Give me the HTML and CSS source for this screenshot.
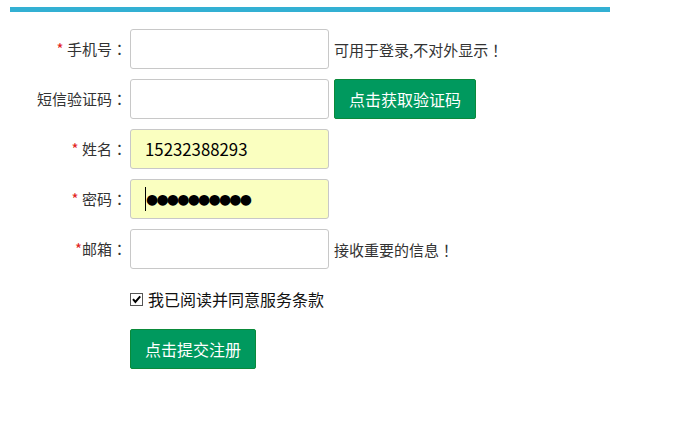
FILE: index.html
```html
<!DOCTYPE html>
<html lang="zh-CN">
<head>
<meta charset="utf-8">
<title>注册</title>
<link rel="stylesheet" href="styles.css">
</head>
<body>
<div class="topbar"></div>
<form class="reg">
  <div class="row">
    <label class="lbl"><span class="req">*</span> 手机号<span class="p" lang="ja">：</span></label>
    <input class="field" type="text">
    <span class="hint">可用于登录,不对外显示<span class="p" lang="ja">！</span></span>
  </div>
  <div class="row">
    <label class="lbl">短信验证码<span class="p" lang="ja">：</span></label>
    <input class="field" type="text">
    <button type="button" class="btn">点击获取验证码</button>
  </div>
  <div class="row">
    <label class="lbl"><span class="req">*</span> 姓名<span class="p" lang="ja">：</span></label>
    <input class="field filled" type="text" value="15232388293">
  </div>
  <div class="row">
    <label class="lbl"><span class="req">*</span> 密码<span class="p" lang="ja">：</span></label>
    <span class="pwwrap">
      <input class="field filled pw" type="text" value="●●●●●●●●●●">
      <span class="caret"></span>
    </span>
  </div>
  <div class="row">
    <label class="lbl"><span class="req">*</span>邮箱<span class="p" lang="ja">：</span></label>
    <input class="field" type="text">
    <span class="hint">接收重要的信息<span class="p" lang="ja">！</span></span>
  </div>
  <div class="check">
    <span class="cbwrap">
      <input type="checkbox" checked class="cb" id="agree">
      <svg class="tick" viewBox="0 0 13 13" width="13" height="13"><path d="M3 6.2 L5.4 9 L10.2 3.4" fill="none" stroke="#000" stroke-width="2"/></svg>
    </span>
    <label for="agree">我已阅读并同意服务条款</label>
  </div>
  <div class="submit">
    <button type="button" class="btn">点击提交注册</button>
  </div>
</form>
</body>
</html>
```
FILE: styles.css
```css
html, body {
  margin: 0;
  padding: 0;
  background: #fff;
}
body {
  font-family: "Noto Sans CJK SC", "Noto Sans", sans-serif;
  font-size: 15px;
  color: #333;
  padding-top: 7px;
  text-spacing-trim: space-all;
}
.p {
  display: inline-block;
  width: 1em;
  text-align: center;
  font-family: "Noto Sans CJK JP", "Noto Sans CJK SC", sans-serif;
  text-spacing-trim: space-all;
}
.topbar {
  margin-left: 10px;
  width: 600px;
  height: 5px;
  background: #33b0d3;
}
.reg {
  margin-top: 17px;
  display: flex;
  flex-direction: column;
}
.row {
  display: flex;
  align-items: center;
  height: 40px;
  margin-bottom: 10px;
}
.lbl {
  width: 127px;
  text-align: right;
  margin-right: 3px;
  white-space: nowrap;
  line-height: 20px;
}
.req {
  color: #e2231a;
}
.field {
  box-sizing: border-box;
  width: 199px;
  height: 40px;
  border: 1px solid #c8c8c8;
  border-radius: 3px;
  padding: 0 14px;
  margin: 0;
  font-family: "Noto Sans CJK SC", sans-serif;
  font-size: 16.8px;
  color: #000;
  background: #fff;
  outline: none;
}
.field.filled {
  background: #faffc0;
}
.pwwrap {
  position: relative;
  display: inline-block;
  height: 40px;
}
.pw {
  font-family: "DejaVu Sans", sans-serif;
  font-size: 14px;
  letter-spacing: -1.8px;
  padding-left: 15px;
}
.caret {
  position: absolute;
  left: 15px;
  top: 8px;
  width: 1px;
  height: 24px;
  background: #000;
}
.hint {
  margin-left: 5px;
  white-space: nowrap;
}
.btn {
  box-sizing: border-box;
  height: 40px;
  padding: 0;
  border: 1px solid #0a8a3a;
  border-radius: 2px;
  background: #00995e;
  color: #fff;
  font-family: "Noto Sans CJK SC", sans-serif;
  font-size: 16px;
  cursor: pointer;
}
.row .btn {
  margin-left: 5px;
  width: 142px;
}
.check {
  display: flex;
  align-items: center;
  height: 20px;
  margin-top: 10px;
  padding-left: 130px;
}
.cbwrap {
  position: relative;
  width: 13px;
  height: 13px;
  margin-right: 5px;
}
.cb {
  appearance: none;
  -webkit-appearance: none;
  display: block;
  box-sizing: border-box;
  margin: 0;
  width: 13px;
  height: 13px;
  border: 1px solid #555;
  background: #fff;
}
.tick {
  position: absolute;
  left: 0;
  top: 0;
  pointer-events: none;
}
.check label {
  color: #111;
  font-size: 16px;
}
.submit {
  margin-top: 20px;
  padding-left: 130px;
}
.submit .btn {
  width: 126px;
}
```
